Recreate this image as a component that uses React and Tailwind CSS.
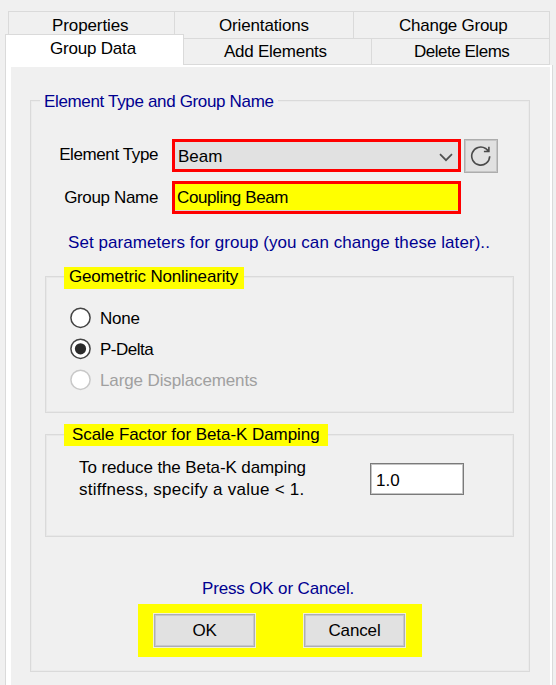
import React from "react";

function Tab({ children, className }) {
  return (
    <button className={`block shrink-0 border-[#dadada] text-left whitespace-nowrap ${className}`}>
      {children}
    </button>
  );
}

function Radio({ label, checked, disabled, className = "" }) {
  return (
    <label className={`flex h-[31px] items-center ${disabled ? "text-[#a0a0a0]" : "text-black"}`}>
      <svg width="22" height="22" viewBox="0 0 22 22" className="-ml-px shrink-0">
        <circle cx="11.5" cy="10.8" r="9.6" fill="#fff" stroke={disabled ? "#c8c8c8" : "#444"} strokeWidth="1.5" />
        {checked && <circle cx="11.5" cy="10.8" r="5.6" fill="#2b2b2b" />}
      </svg>
      <span className={`ml-[9px] pt-[2px] leading-5 whitespace-nowrap ${className}`}>{label}</span>
    </label>
  );
}

function PushButton({ children, className = "" }) {
  return (
    <div className="h-[35px] w-[103px] border border-[#f0f0d8] bg-[#e8e8e8]">
      <button className={`flex h-[33px] w-[101px] items-center justify-center border border-[#adadb5] bg-[#e1e1e1] shadow-[inset_0_0_0_1px_#c8c8cc] ${className}`}>
        {children}
      </button>
    </div>
  );
}

export default function App() {
  return (
    <div className="flex h-[685px] w-[556px] flex-col overflow-hidden bg-[#f0f0f0] pt-[11px] font-['Liberation_Sans',Arial,sans-serif] text-[17px] leading-5 text-black">
      <div className="ml-[8px] flex h-[27px] w-[542px] border-t border-r border-l border-[#dadada]">
        <Tab className="w-[166px] border-r pl-[43px] leading-[27px] tracking-[-0.1px]">Properties</Tab>
        <Tab className="w-[179px] border-r pl-[44px] leading-[27px] tracking-[-0.15px]">Orientations</Tab>
        <Tab className="pl-[45px] leading-[27px] tracking-[-0.25px]">Change Group</Tab>
      </div>
      <div className="z-10 -mt-[4px] ml-[5px] flex h-[31px] w-[545px] items-end">
        <Tab className="h-[31px] w-[179px] border-t border-r border-l bg-white pb-[2px] pl-[44px] leading-[28px] tracking-[-0.2px]">Group Data</Tab>
        <Tab className="h-[27px] w-[188px] border-t border-r border-b pl-[40px] leading-[26px] tracking-[-0.25px]">Add Elements</Tab>
        <Tab className="h-[27px] w-[178px] border-t border-r border-b pl-[42px] leading-[26px] tracking-[-0.48px]">Delete Elems</Tab>
      </div>
      <div className="ml-[5px] flex h-[640px] w-[548px] shrink-0 flex-col border-r border-l border-[#dadada] bg-white pt-[2px] pr-[2px] pl-[5px]">
        <div className="h-[640px] bg-[#f0f0f0] pt-[33px] pl-[19px]">
          <section className="h-[572px] w-[500px] border border-[#dadada] shadow-[inset_0_0_0_1px_#ebebeb]">
            <h2 className="-mt-[10px] ml-[9px] h-5 w-[238px] bg-[#f0f0f0] pl-[4px] leading-[22px] tracking-[-0.34px] whitespace-nowrap text-[#000090]">
              Element Type and Group Name
            </h2>
            <div className="mt-[28px] flex h-[34px]">
              <label className="w-[141px] pt-[6px] pr-[14px] text-right tracking-[-0.4px] whitespace-nowrap">Element Type</label>
              <div className="flex h-[33px] w-[289px] items-center justify-between border-3 border-[#ff0000] bg-[#e1e1e1] pr-[5px] pl-[3px]">
                <span className="pt-[2px]">Beam</span>
                <svg width="14" height="9" viewBox="0 0 14 9" fill="none" stroke="#505050" strokeWidth="1.7" className="mt-[3px]">
                  <path d="M1 1.2 7 7.2 13 1.2" />
                </svg>
              </div>
              <button className="ml-[3px] flex h-[34px] w-[34px] items-center justify-center border border-[#adadad] bg-[#e1e1e1] shadow-[inset_0_0_0_1px_#c6c6c6]">
                <svg width="22" height="22" viewBox="0 0 22 22" fill="none" stroke="#4a4a4a" strokeWidth="1.6">
                  <path d="M19.7 11.2A9 9 0 1 1 15.6 3.5L18.6 6" />
                  <path d="M18.9 1.8v4.7h-5" />
                  <path d="M18.9 3.4v3.1h-3.2z" fill="#4a4a4a" stroke="none" />
                </svg>
              </button>
            </div>
            <div className="mt-[8px] flex h-[33px]">
              <label className="w-[141px] pt-[7px] pr-[14px] text-right tracking-[-0.35px] whitespace-nowrap">Group Name</label>
              <div className="h-[33px] w-[289px] border-3 border-[#ff0000] bg-[#ffff00] pt-[4px] pl-[2px] tracking-[-0.4px] whitespace-nowrap shadow-[inset_0_-1px_0_#d8d8d0]">
                Coupling Beam
              </div>
            </div>
            <p className="mt-[19px] ml-[37px] tracking-[0.06px] whitespace-nowrap text-[#000090]">
              Set parameters for group (you can change these later)..
            </p>

            <section className="mt-[23px] ml-[14px] h-[137px] w-[469px] border border-[#dadada] shadow-[inset_0_0_0_1px_#e8e8e8]">
              <h3 className="-mt-[10px] ml-[18px] h-[22px] w-[180px] bg-[#ffff00] pl-[5px] leading-[20px] tracking-[-0.17px] whitespace-nowrap">
                Geometric Nonlinearity
              </h3>
              <div className="mt-[13px] ml-[24px]">
                <Radio label="None" className="tracking-[-0.2px]" />
                <Radio label="P-Delta" checked className="tracking-[-0.5px]" />
                <Radio label="Large Displacements" disabled className="tracking-[-0.12px]" />
              </div>
            </section>

            <section className="mt-[21px] ml-[14px] h-[103px] w-[469px] border border-[#dadada] shadow-[inset_0_0_0_1px_#e8e8e8]">
              <h3 className="-mt-[11px] ml-[18px] h-[22px] w-[264px] bg-[#ffff00] pl-[8px] leading-[21px] tracking-[-0.06px] whitespace-nowrap">
                Scale Factor for Beta-K Damping
              </h3>
              <div className="mt-[11px] ml-[33px] flex">
                <p className="w-[291px] leading-[22px] whitespace-nowrap">
                  <span className="tracking-[-0.1px]">To reduce the Beta-K damping</span>
                  <br />
                  <span className="tracking-[0.26px]">stiffness, specify a value &lt; 1.</span>
                </p>
                <div className="mt-[6px] h-[32px] w-[94px] border border-[#7a7a7a] bg-white pt-[7px] pl-[5px] shadow-[inset_0_0_0_1px_#c4c4c4]">
                  1.0
                </div>
              </div>
            </section>

            <p className="mt-[42px] ml-[171px] tracking-[-0.15px] whitespace-nowrap text-[#000090]">Press OK or Cancel.</p>
            <div className="mt-[5px] ml-[107px] flex h-[53px] w-[284px] justify-between bg-[#ffff00] pt-[9px] pr-[16px] pl-[15px]">
              <PushButton className="tracking-[-0.3px]">OK</PushButton>
              <PushButton className="tracking-[-0.15px]">Cancel</PushButton>
            </div>
          </section>
        </div>
      </div>
    </div>
  );
}
